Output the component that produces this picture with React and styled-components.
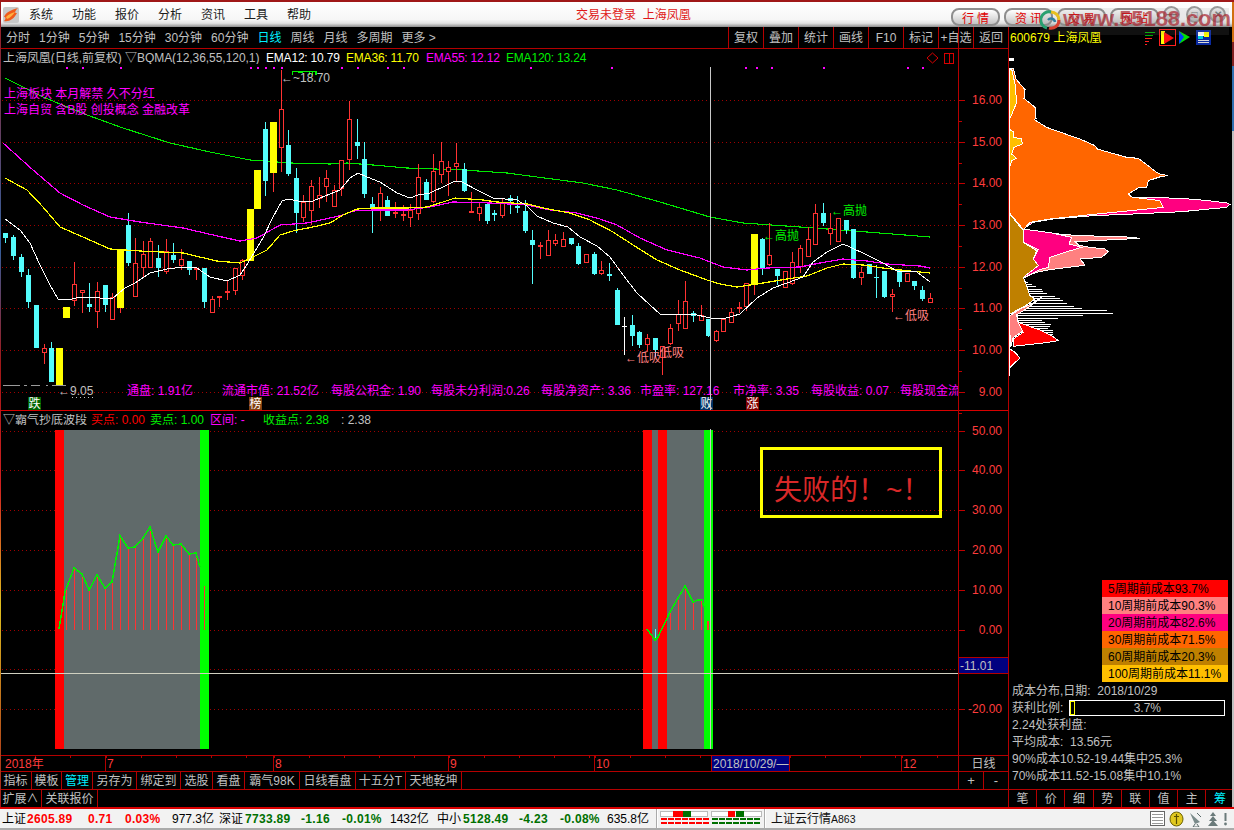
import React from 'react';
import styled, { createGlobalStyle } from 'styled-components';

const FONT = '"Liberation Sans","Noto Sans CJK SC",sans-serif';
const RED = '#b40000';
const GRAY = '#c0c0c0';

const Global = createGlobalStyle`
  html, body { margin: 0; padding: 0; background: #000; }
  body { width: 1234px; height: 830px; overflow: hidden; font-family: ${FONT}; }
`;

const Page = styled.div`
  position: relative; width: 1234px; height: 830px; display: flex; flex-direction: column;
  background: #000; color: ${GRAY}; font-size: 12px; overflow: hidden; line-height: 1;
`;
const EdgeStrip = styled.div`
  position: absolute; top: 2px; bottom: 23px; width: ${p => p.$w}px; ${p => p.$side}: 0;
  background: ${p => p.$bg};
`;

/* ---------- title bar ---------- */
const TitleBar = styled.header`
  height: 25px; flex: none; border-top: 2px solid #a01818; display: flex; align-items: center; position: relative;
  background: linear-gradient(#ffffff 0, #f6f6f6 70%, #e2e2e2 85%, #8c8c8c 100%);
  color: #222;
`;
const Logo = styled.svg` width: 16px; height: 16px; margin: 0 0 0 3px; flex: none; `;
const Menu = styled.nav` display: flex; margin-left: 10px; `;
const MenuItem = styled.span` width: 43px; font-size: 12px; color: #1c1c1c; `;
const LoginTitle = styled.span` margin-left: 246px; color: #e01818; font-size: 12px; white-space: pre; `;
const PillGroup = styled.div` position: absolute; left: 951px; top: 6px; display: flex; gap: 4px; `;
const Pill = styled.button`
  width: ${p => p.$w}px; height: 18px; padding: 0 9px; display: flex; justify-content: space-between; align-items: center;
  border: 2px solid #8e8e8e; border-radius: 8px; color: #e00000; font: 12px ${FONT};
  background: linear-gradient(#ffffff, #dddddd 60%, #c4c4c4);
`;
const WindowButtons = styled.div` position: absolute; left: 1163px; top: 4px; display: flex; gap: 6px; `;
const WindowButton = styled.span`
  width: 17px; height: 17px; border-radius: 50%; border: 2px solid #9a9a9a; box-sizing: border-box;
  display: flex; align-items: center; justify-content: center; color: #777; font-size: 10px; font-weight: bold;
  background: linear-gradient(#f4f4f4, #b8b8b8);
`;
const Watermark = styled.div`
  position: absolute; left: 1040px; top: 8px; width: 189px; height: 27px; display: flex; align-items: flex-start;
  background: rgba(128,128,128,.13); pointer-events: none;
`;
const WatermarkText = styled.span`
  font: bold 22px/22px ${FONT}; color: rgba(170,40,50,.72); margin-left: 1px; letter-spacing: -.1px; white-space: nowrap;
`;

/* ---------- workspace ---------- */
const Workspace = styled.div` flex: 1; display: flex; min-height: 0; `;
const LeftCol = styled.section` width: 1008px; flex: none; display: flex; flex-direction: column; `;
const RightCol = styled.aside` width: 225px; flex: none; border-left: 1px solid ${RED}; display: flex; flex-direction: column; `;

const Toolbar = styled.div`
  height: 21px; flex: none; display: flex; align-items: center; border-bottom: 1px solid ${RED}; padding-left: 6px; gap: 9px;
`;
const ToolItem = styled.span` color: ${p => (p.$active ? '#00f0ff' : GRAY)}; white-space: nowrap; `;
const ToolCells = styled.div` margin-left: auto; display: flex; align-self: stretch; `;
const ToolCell = styled.span`
  width: 35px; box-sizing: border-box; border-left: 1px solid ${RED}; display: flex; align-items: center; justify-content: center; white-space: nowrap;
`;

const PanelHeader = styled.div`
  height: 18px; flex: none; display: flex; align-items: center; padding-left: 3px; white-space: pre; overflow: hidden;
`;
const Caption = styled.span`
  color: ${p => p.$c || GRAY}; flex: none; width: ${p => (p.$w ? `${p.$w}px` : 'auto')};
  letter-spacing: ${p => p.$ls || 0}px; overflow: hidden;
`;
const HeaderMarks = styled.svg` width: 31px; height: 18px; margin-left: auto; flex: none; `;
const AxisStub = styled.span` width: 50px; box-sizing: border-box; border-left: 1px solid ${RED}; align-self: stretch; flex: none; margin-left: ${p => (p.$auto ? 'auto' : 0)}; `;

const PlotRow = styled.div` height: ${p => p.$h}px; flex: none; display: flex; border-bottom: ${p => (p.$line ? '1px solid #d80000' : 'none')}; `;
const PlotSvg = styled.svg` width: 958px; height: 100%; display: block; flex: none; font-family: ${FONT}; `;
const AxisSvg = styled.svg` width: 50px; height: 100%; display: block; flex: none; font-family: ${FONT}; overflow: visible; `;
const Label = styled.text` font-size: ${p => p.$s || 12}px; fill: ${p => p.$c || GRAY}; `;

const DateRow = styled.div` height: 15px; flex: none; border-top: 1px solid ${RED}; display: flex; `;
const DateCell = styled.span`
  width: ${p => p.$w}px; box-sizing: border-box; display: flex; align-items: center; padding-left: ${p => (p.$first ? 5 : 1)}px;
  color: #ff3c3c; border-left: ${p => (p.$first ? 'none' : `1px solid ${RED}`)};
  background: repeating-linear-gradient(90deg, ${RED} 0 1px, transparent 1px 35px) 0 0 / 100% 2px no-repeat;
`;
const CursorDate = styled.span`
  width: 79px; box-sizing: border-box; background: #000080; color: ${GRAY}; display: flex; align-items: center;
  border-left: 1px solid ${RED}; border-right: 1px solid ${RED}; padding-left: 1px; white-space: nowrap;
`;
const DateGap = styled.span` flex: 1; background: repeating-linear-gradient(90deg, ${RED} 0 1px, transparent 1px 35px) 0 0 / 100% 2px no-repeat; `;
const PeriodCell = styled.span`
  width: 50px; box-sizing: border-box; border-left: 1px solid ${RED}; display: flex; align-items: center; justify-content: center; flex: none;
`;
const TabRow = styled.div` height: 17px; flex: none; border-top: 1px solid ${RED}; display: flex; `;
const Tab = styled.span`
  width: ${p => p.$w}px; box-sizing: border-box; border-right: 1px solid ${RED}; display: flex; align-items: center; justify-content: center;
  color: ${p => (p.$active ? '#00f0ff' : GRAY)}; white-space: nowrap; flex: none;
`;
const ZoomCell = styled.span`
  width: 25px; box-sizing: border-box; flex: none; border-left: 1px solid ${RED}; display: flex; align-items: center; justify-content: center; font-size: 13px;
`;
const RowSpacer = styled.span` flex: 1; `;

/* ---------- right column ---------- */
const StockHead = styled.div` height: 21px; flex: none; display: flex; align-items: center; padding-left: 1px; color: #ffff00; `;
const HeadIcon = styled.svg` flex: none; position: relative; `;
const DistSvg = styled.svg` width: 224px; height: 532px; flex: none; display: block; `;
const Legend = styled.ul` list-style: none; margin: 0 0 0 93px; padding: 0; width: 126px; flex: none; `;
const LegendRow = styled.li`
  height: 17px; background: ${p => p.$c}; color: #000; display: flex; align-items: center; padding-left: 6px; white-space: nowrap;
`;
const InfoRow = styled.div` height: 17px; flex: none; padding-left: 3px; display: flex; align-items: center; white-space: pre; `;
const RatioBar = styled.div`
  position: relative; margin-left: 6px; width: 156px; height: 16px; box-sizing: border-box; border: 1px solid #fff;
  display: flex; align-items: center; justify-content: center;
`;
const RatioFill = styled.span`
  position: absolute; left: 0; top: 0; bottom: 0; width: 3px; border: 1px solid #ffff00; box-sizing: content-box; height: 12px;
`;
const BottomTabs = styled.div` height: 17px; flex: none; margin-top: auto; border-top: 1px solid ${RED}; display: flex; `;
const BottomTab = styled.span`
  width: 28.2px; box-sizing: border-box; border-right: 1px solid ${RED}; display: flex; align-items: center; justify-content: center;
  color: ${p => (p.$active ? '#00f0ff' : GRAY)}; flex: none;
`;

/* ---------- status bar ---------- */
const StatusBar = styled.footer`
  height: 23px; flex: none; box-sizing: border-box; border-top: 2px solid #d80000; border-bottom: 2px solid #aaa; background: #f2f2f2;
  display: flex; align-items: center; padding-left: 2px; color: #000; white-space: nowrap;
`;
const StatusItem = styled.span`
  width: ${p => p.$w}px; flex: none; color: ${p => p.$c || '#000'}; font-weight: ${p => (p.$b ? 'bold' : 'normal')}; font-size: 12px;
  letter-spacing: ${p => (p.$b ? 0.3 : 0)}px;
`;
const StatusSep = styled.span` width: 0; align-self: stretch; border-left: 1px solid #aaa; border-right: 1px solid #fff; margin: 0 ${p => p.$m || 4}px; `;
const Ticker = styled.span` margin-left: 3px; color: #111; `;
const TickerCode = styled.span` font-size: 10.5px; `;
const StatusIcons = styled.div` margin-left: auto; display: flex; align-items: center; gap: 4px; padding-right: 6px; `;

/* ---------- data ---------- */
const candles = [
  [5,233,233,238,243,'c'],[13,235,237,256,260,'c'],[21,254,257,272,277,'c'],[28,269,275,302,308,'c'],[36,305,305,348,348,'c'],
  [44,344,348,353,364,'r'],[51,342,348,382,382,'c'],[59,348,348,385,385,'y'],[66,307,307,318,318,'y'],[74,262,284,301,306,'r'],
  [82,290,290,293,313,'r'],[89,283,304,307,312,'c'],[97,282,291,312,328,'r'],[105,285,285,305,312,'c'],[112,293,297,320,320,'r'],
  [120,249,249,308,313,'y'],[128,213,225,263,266,'c'],[135,238,263,297,297,'r'],[143,241,254,268,278,'r'],[150,238,241,268,268,'r'],
  [158,245,258,268,277,'c'],[166,239,251,272,274,'r'],[173,243,255,260,263,'c'],[181,249,259,266,270,'r'],[189,261,261,270,275,'c'],
  [196,268,268,270,280,'r'],[204,268,268,302,308,'c'],[212,296,299,313,313,'r'],[219,296,296,297,307,'r'],[227,281,291,293,300,'r'],
  [235,268,268,291,295,'r'],[242,259,260,276,280,'r'],[250,209,209,261,261,'y'],[257,170,170,209,209,'y'],[265,122,129,181,196,'c'],
  [273,122,122,173,192,'y'],[281,70,109,148,172,'r'],[288,130,145,174,176,'c'],[296,168,178,213,233,'c'],[303,195,202,218,222,'r'],
  [311,180,186,211,225,'r'],[319,177,195,199,208,'r'],[326,170,178,187,202,'r'],[334,185,190,207,207,'r'],[341,160,160,189,196,'r'],
  [349,101,119,160,170,'r'],[357,119,142,146,159,'c'],[364,142,159,194,198,'c'],[372,197,204,208,233,'c'],[380,187,193,209,221,'r'],
  [387,196,200,216,216,'c'],[395,202,212,214,218,'r'],[403,205,214,215,221,'r'],[410,204,210,218,227,'r'],[418,164,177,214,220,'r'],
  [426,179,182,200,200,'c'],[433,154,171,202,203,'r'],[441,142,161,175,183,'r'],[448,161,167,172,196,'r'],[456,143,163,167,181,'r'],
  [464,163,169,191,192,'c'],[471,192,211,213,213,'r'],[479,202,207,214,221,'r'],[487,204,204,221,224,'c'],[494,210,213,215,221,'c'],
  [502,199,203,216,218,'r'],[510,195,198,201,214,'c'],[517,196,206,208,213,'c'],[525,200,211,231,233,'c'],[532,230,240,245,284,'c'],
  [540,242,245,246,259,'r'],[548,230,240,256,256,'r'],[555,234,240,244,246,'r'],[563,232,239,247,247,'r'],[571,238,238,244,245,'c'],
  [578,243,246,264,265,'c'],[586,254,254,263,263,'r'],[594,252,254,274,275,'c'],[601,261,270,274,275,'r'],[609,263,274,276,281,'c'],
  [617,288,290,325,325,'c'],[624,317,326,327,355,'w'],[632,315,325,336,346,'c'],[639,331,332,345,348,'c'],[647,334,338,345,351,'r'],
  [655,338,338,350,357,'c'],[662,346,346,358,375,'r'],[670,324,328,344,345,'r'],[678,300,314,324,331,'r'],[685,281,301,329,329,'r'],
  [693,311,313,316,322,'c'],[701,305,315,321,321,'r'],[708,319,319,336,337,'c'],[716,330,331,341,342,'r'],[723,319,319,332,332,'r'],
  [731,308,312,323,323,'r'],[739,302,307,308,313,'r'],[746,283,283,307,311,'r'],[754,234,234,285,295,'y'],[762,238,239,268,275,'c'],
  [769,223,255,265,266,'r'],[777,269,269,276,285,'c'],[785,271,271,288,288,'r'],[792,252,262,284,285,'r'],[800,245,248,267,273,'r'],
  [808,227,239,257,257,'r'],[815,204,213,245,245,'r'],[823,203,213,223,226,'c'],[830,213,228,234,245,'r'],[838,218,218,242,242,'r'],
  [846,220,220,230,234,'c'],[853,229,229,278,279,'c'],[861,267,272,278,285,'r'],[869,264,264,274,274,'c'],[876,265,277,278,298,'c'],
  [884,271,271,297,298,'c'],[892,289,294,297,312,'r'],[899,269,269,282,287,'c'],[907,273,273,282,282,'r'],[914,281,281,286,290,'c'],
  [922,286,290,299,301,'c'],[930,293,298,303,303,'r'],
];

const white = '5,219 20,230 30,243 40,265 50,285 58,299 68,300 80,297 100,298 113,298 125,288 135,283 150,273 167,269 183,267 197,268 210,277 227,281 240,275 248,263 263,238 273,217 282,201 288,199 303,202 313,201 325,196 340,190 350,178 358,173 367,177 380,182 397,193 410,198 418,195 430,193 447,185 455,181 462,182 477,190 493,198 517,200 527,206 537,216 553,223 568,227 580,237 597,246 610,257 623,275 637,293 650,305 660,314 670,315 693,314 710,318 723,319 740,314 757,298 773,288 787,283 803,277 813,262 827,252 843,244 850,247 867,255 883,263 897,271 917,272 930,282';
const yellow = '5,178 27,190 43,207 60,227 83,237 110,249 140,251 183,253 217,261 240,263 253,257 267,250 280,235 293,231 313,227 330,223 343,215 357,209 373,208 407,208 427,207 443,202 455,198 483,200 497,202 527,204 543,208 570,213 590,220 613,232 633,245 657,260 680,270 707,280 720,284 737,287 763,283 787,279 807,276 827,268 843,264 863,265 883,268 910,271 930,273';
const magenta = '3,143 33,170 60,193 83,205 110,217 140,222 183,228 213,235 240,241 257,238 280,225 307,223 330,218 343,215 353,211 373,210 407,210 430,207 453,202 490,203 527,205 550,210 577,213 600,219 617,225 640,238 667,250 700,258 723,267 747,270 767,268 800,267 820,263 843,259 867,261 887,264 920,266 930,268';
const green = '5,78 43,97 87,115 123,128 170,143 210,152 250,160 290,163 330,164 347,163 373,165 407,168 463,170 507,173 537,177 583,183 617,190 660,202 710,217 743,223 800,227 867,232 930,237';

const priceTicks = [100,142,183,225,267,308,350,392];
const priceLabels = ['16.00','15.00','14.00','13.00','12.00','11.00','10.00','9.00'];
const lowerTicks = [431,470,510,550,590,630,669,709];
const lowerLabels = ['50.00','40.00','30.00','20.00','10.00','0.00','','-20.00'];

const magentaDots = [66,82,120,250,257,265,273,281,341,357,387,403,530,611,745,756,771,823,907,922];
const stats = [
  [127,'通盘: 1.91亿'],[222,'流通市值: 21.52亿'],[331,'每股公积金: 1.90'],[431,'每股未分利润:0.26'],[541,'每股净资产: 3.36'],
  [640,'市盈率: 127.16'],[733,'市净率: 3.35'],[811,'每股收益: 0.07'],[900,'每股现金流'],
];
const tags = [[28,'跌','#006400'],[249,'榜','#804010'],[700,'败','#003366'],[746,'涨','#800000']];

const line1 = '59,629 65,592 74,568 82,574 89,590 97,575 105,588 112,582 120,536 128,548 135,547 143,538 150,527 158,552 166,536 173,545 181,544 189,554 196,553 200,567';
const red1 = [[66,590],[74,568],[82,574],[89,590],[97,575],[105,588],[112,582],[120,538],[128,548],[135,547],[143,538],[150,527],[158,552],[166,536],[173,545],[181,544],[189,554],[196,553],[204,586]];
const line2 = '647,629 655,640 658,637 670,612 685,586 693,602 698,600 702,600 704,607';
const red2 = [[670,612],[678,600],[685,586],[693,602],[701,600]];

const distWhite = [[668,85],[675,95],[682,108],[690,125],[696,130],[703,140],[710,165],[717,180],[724,188],[732,200],[740,222],[747,245],[754,322],[762,340],[769,250],[776,175],[783,125],[789,135],[795,152],[801,150],[807,145],[813,158],[819,160],[825,160],[831,158],[840,170]];
const P = {
  orange: '27,28 40,28 48,60 75,92 72,118 105,145 108,178 103,182 140,205 205,228 240,240 285,260 292,270 380,295 415,298 470,340 480,345 505,350 485,352 445,365 440,385 418,385 385,405 395,414 480,425 490,445 470,447 300,464 150,480 90,490 70,512 27,460',
  gold1: '27,30 35,30 45,75 50,130 42,150 27,185',
  gold2: '27,210 40,218 42,235 65,240 67,255 42,265 35,285 50,298 35,305 27,330',
  deep: '385,405 395,414 545,418 625,425 680,432 690,436 680,445 545,458 400,465 280,470 160,480 100,490 70,510 155,522 215,535 207,555 245,565 195,580 150,595 145,625 118,632 75,655 70,650 115,620 100,600 115,572 70,550 50,500 300,440',
  lightA: '70,655 110,640 150,632 245,620 255,618 240,600 305,595 325,578 315,570 270,565 235,558 225,548 420,538 370,533 235,530 155,523 70,515',
  brown: '27,462 70,515 70,550 110,575 100,600 115,620 70,655 80,680 90,710 105,720 85,735 30,765 27,770',
  lightB: '125,715 95,735 60,750 30,770 27,772 32,865 40,835 70,815 55,790 50,768 100,735',
  redA: '55,790 125,815 155,830 175,845 130,852 40,862 40,840 70,820',
  redB: '27,925 30,870 45,880 60,897 30,925 27,942',
};
const legend = [
  ['#ff0000','5周期前成本93.7%'],['#ff8080','10周期前成本90.3%'],['#ff0080','20周期前成本82.6%'],
  ['#ff6600','30周期前成本71.5%'],['#bf8000','60周期前成本20.3%'],['#ffbf00','100周期前成本11.1%'],
];
const statusItems = [
  ['上证',25],['2605.89',61,'#ff0000',1],['0.71',37,'#ff0000',1],['0.03%',47,'#ff0000',1],['977.3亿',47],
  ['深证',26],['7733.89',56,'#007000',1],['-1.16',41,'#007000',1],['-0.01%',48,'#007000',1],['1432亿',47],
  ['中小',26],['5128.49',56,'#007000',1],['-4.23',41,'#007000',1],['-0.08%',47,'#007000',1],['635.8亿',47],
];

/* ---------- drawings ---------- */
function Candle({ d }) {
  const [cx, hi, top, bot, lo, t] = d;
  const px = Math.round(cx);
  const col = { c: '#54fcfc', r: '#ff3232', y: '#ffff00', w: '#ffffff' }[t];
  const wick = t === 'y' ? '#ff3232' : col;
  if (t === 'y') return (
    <g>
      <line x1={px + .5} x2={px + .5} y1={hi} y2={lo} stroke={wick} />
      <rect x={px - 3} y={top} width={7} height={bot - top} fill={col} />
    </g>
  );
  return (
    <g>
      <line x1={px + .5} x2={px + .5} y1={hi} y2={lo} stroke={wick} />
      {t === 'r'
        ? <rect x={px - 1.5} y={top + .5} width={4} height={Math.max(bot - top - 1, 1)} fill="#000" stroke={col} />
        : <rect x={px - 2} y={top} width={5} height={Math.max(bot - top, 1)} fill={col} />}
    </g>
  );
}

function UpperPlot() {
  return (
    <PlotSvg viewBox="0 67 958 343" shapeRendering="crispEdges">
      {priceTicks.map(y => <line key={y} x1={2} x2={958} y1={y + .5} y2={y + .5} stroke="#a00000" strokeDasharray="1 3" />)}
      {magentaDots.map(x => <rect key={x} x={x} y={67} width={2} height={2} fill="#ff00ff" />)}
      <polyline points={green} fill="none" stroke="#00e800" strokeWidth="1.1" />
      {candles.map(d => <Candle key={d[0]} d={d} />)}
      <polyline points={magenta} fill="none" stroke="#ff00ff" strokeWidth="1.2" />
      <polyline points={yellow} fill="none" stroke="#ffff00" strokeWidth="1.2" />
      <polyline points={white} fill="none" stroke="#ffffff" strokeWidth="1" />
      <path d="M292 75V71H316V75M298 72H303M309 72V75M312 72V75M315 72V75" fill="none" stroke="#00f000" />
      <Label x={281} y={82} $s={12}>←~18.70</Label>
      <Label x={4} y={98} $c="#ff00ff">上海板块 本月解禁 久不分红</Label>
      <Label x={4} y={114} $c="#ff00ff">上海自贸 含B股 创投概念 金融改革</Label>
      <Label x={763} y={240} $c="#00f000">←高抛</Label>
      <Label x={831} y={215} $c="#00f000">←高抛</Label>
      <Label x={625} y={362} $c="#ff8080">←低吸</Label>
      <Label x={660} y={357} $c="#ff8080">低吸</Label>
      <Label x={893} y={320} $c="#ff8080">←低吸</Label>
      <Label x={58} y={395}>←9.05</Label>
      <path d="M3 385.5H20M24 385.5H27M31 385.5H40M46 385.5H48M52 385.5H66" stroke="#9a9a9a" fill="none" />
      <line x1={72} x2={96} y1={397.5} y2={397.5} stroke="#c0c0c0" strokeDasharray="1 3" />
      {stats.map(([x, t]) => <Label key={x} x={x} y={395} $c="#ff00ff">{t}</Label>)}
      {tags.map(([x, t, c]) => (
        <g key={x}>
          <rect x={x} y={396.5} width={13} height={13} fill={c} />
          <Label x={x + .5} y={407.5} $c="#fff">{t}</Label>
        </g>
      ))}
      <line x1={710.5} x2={710.5} y1={67} y2={410} stroke="#c8c8c8" />
    </PlotSvg>
  );
}

function PriceAxis({ vb, ticks, labels, minor, children }) {
  return (
    <AxisSvg viewBox={vb}>
      <line x1={958.5} x2={958.5} y1={0} y2={755} stroke={RED} />
      {ticks.map((y, i) => (
        <g key={y}>
          <line x1={959} x2={965} y1={y + .5} y2={y + .5} stroke="#c00000" />
          {minor && <line x1={959} x2={962} y1={y + 21.5} y2={y + 21.5} stroke="#c00000" />}
          <Label x={1002} y={y + 4} textAnchor="end" $c="#ff3c3c">{labels[i]}</Label>
        </g>
      ))}
      {children}
    </AxisSvg>
  );
}

function LowerPlot() {
  return (
    <PlotSvg viewBox="0 429 958 326" shapeRendering="crispEdges">
      {lowerTicks.map(y => <line key={y} x1={2} x2={958} y1={y + .5} y2={y + .5} stroke="#a00000" strokeDasharray="1 3" />)}
      <rect x={55} y={430} width={9} height={319} fill="#ff0000" />
      <rect x={64} y={430} width={136} height={319} fill="#606a6a" />
      <rect x={200} y={430} width={9} height={319} fill="#00ff00" />
      <rect x={643} y={430} width={9} height={319} fill="#ff0000" />
      <rect x={652} y={430} width={6} height={319} fill="#606a6a" />
      <rect x={658} y={430} width={9} height={319} fill="#ff0000" />
      <rect x={667} y={430} width={37} height={319} fill="#606a6a" />
      <rect x={704} y={430} width={9} height={319} fill="#00ff00" />
      {red1.map(([x, y]) => <line key={x} x1={x + .5} x2={x + .5} y1={y} y2={630} stroke="#ff3232" />)}
      {red2.map(([x, y]) => <line key={x} x1={x + .5} x2={x + .5} y1={y} y2={630} stroke="#ff3232" />)}
      <rect x={707} y={621} width={2} height={9} fill="#ff3232" />
      <line x1={655.5} x2={655.5} y1={629} y2={641} stroke="#54fcfc" />
      <polyline points={line1} fill="none" stroke="#00f000" strokeWidth="1.5" />
      <polyline points={line2} fill="none" stroke="#00f000" strokeWidth="1.5" />
      <line x1={710.5} x2={710.5} y1={428} y2={749} stroke="#c8c8c8" />
      <line x1={0} x2={958} y1={673.5} y2={673.5} stroke="#d0d0c0" />
      <rect x={761.5} y={448.5} width={179} height={68} fill="none" stroke="#ffff00" strokeWidth="3" />
      <Label x={774} y={500} $s={28} $c="#d82828">失败的！~！</Label>
    </PlotSvg>
  );
}

const Swirl = () => (
  <svg width="22" height="24" viewBox="0 0 22 24" style={{ flex: 'none' }}>
    <path d="M11 4a8 8 0 0 1 8 8" fill="none" stroke="#e8c020" strokeWidth="3" />
    <path d="M19 12a8 8 0 0 1-10 8" fill="none" stroke="#d84030" strokeWidth="3" />
    <path d="M7 20a8 8 0 0 1 4-16" fill="none" stroke="#28a070" strokeWidth="3" />
    <path d="M8 12a4 4 0 0 1 7 2" fill="none" stroke="#3080a0" strokeWidth="2.5" />
  </svg>
);

function IndicatorBoxes() {
  const dash = (x0, col, n = 7) => Array.from({ length: n }).flatMap((_, i) => [
    <rect key={`a${x0}${i}`} x={x0 + i * 7} y={7} width={6} height={2} fill={col} />,
    <rect key={`b${x0}${i}`} x={x0 + i * 7} y={11} width={6} height={2} fill={col} />,
  ]);
  return (
    <svg width="102" height="16" viewBox="0 0 102 16" style={{ flex: 'none' }}>
      <rect x=".5" y=".5" width="47" height="5" fill="#fff" stroke="#bbb" />
      <rect x="51.5" y=".5" width="50" height="5" fill="#fff" stroke="#bbb" />
      <rect x="13" y="0" width="10" height="6" fill="#ff0000" />
      <rect x="23" y="0" width="8" height="6" fill="#007000" />
      <rect x="68" y="0" width="7" height="6" fill="#ff0000" />
      <rect x="76" y="0" width="8" height="6" fill="#007000" />
      {dash(1, '#ff0000')}
      {dash(52, '#007000')}
    </svg>
  );
}

const tabs = [['指标',32],['模板',30],['管理',31,1],['另存为',44],['绑定到',44],['选股',32],['看盘',32],['霸气98K',55],['日线看盘',56],['十五分T',50],['天地乾坤',56]];

export default function App() {
  return (
    <>
      <Global />
      <Page>
        <TitleBar>
          <Logo viewBox="0 0 16 16">
            <rect width="16" height="16" fill="#c8c8c8" rx="2" />
            <path d="M1 10C3 5 8 3 15 1 12 4 11 6 14 6 11 12 6 15 1 14 3 12 3 10 1 10z" fill="#f05a1a" />
            <path d="M3 10c3-3 6-4 9-5-2 3-5 6-8 7z" fill="#ffb040" />
          </Logo>
          <Menu>{['系统','功能','报价','分析','资讯','工具','帮助'].map(m => <MenuItem key={m}>{m}</MenuItem>)}</Menu>
          <LoginTitle>交易未登录  上海凤凰</LoginTitle>
          <PillGroup>
            <Pill $w={49}><span>行</span><span>情</span></Pill>
            <Pill $w={49}><span>资</span><span>讯</span></Pill>
            <Pill $w={49}><span>交</span><span>易</span></Pill>
            <Pill $w={49}><span>网</span><span>站</span></Pill>
          </PillGroup>
          <WindowButtons>
            <WindowButton>—</WindowButton>
            <WindowButton>□</WindowButton>
            <WindowButton>✕</WindowButton>
          </WindowButtons>
        </TitleBar>

        <Workspace>
          <LeftCol>
            <Toolbar>
              {['分时','1分钟','5分钟','15分钟','30分钟','60分钟'].map(t => <ToolItem key={t}>{t}</ToolItem>)}
              <ToolItem $active>日线</ToolItem>
              {['周线','月线','多周期','更多 >'].map(t => <ToolItem key={t}>{t}</ToolItem>)}
              <ToolCells>
                {['复权','叠加','统计','画线','F10','标记','+自选','返回'].map(t => <ToolCell key={t}>{t}</ToolCell>)}
              </ToolCells>
            </Toolbar>
            <PanelHeader>
              <Caption $w={263} $ls={-0.05}>上海凤凰(日线,前复权) ▽BQMA(12,36,55,120,1)</Caption>
              <Caption $w={80} $ls={-0.2} $c="#fff">EMA12: 10.79</Caption>
              <Caption $w={80} $ls={-0.2} $c="#ffff00">EMA36: 11.70</Caption>
              <Caption $w={80} $ls={-0.2} $c="#ff00ff">EMA55: 12.12</Caption>
              <Caption $w={90} $ls={-0.2} $c="#00f000">EMA120: 13.24</Caption>
              <HeaderMarks viewBox="0 0 31 18">
                <path d="M5.5 4l5.5 5-5.5 5L0 9z" fill="none" stroke="#d80000" />
                <rect x="17.5" y="4.5" width="9" height="10" fill="none" stroke="#d80000" />
                <line x1="22.5" x2="22.5" y1="5" y2="14" stroke="#d80000" />
              </HeaderMarks>
              <AxisStub />
            </PanelHeader>
            <PlotRow $h={343} $line>
              <UpperPlot />
              <PriceAxis vb="958 67 50 343" ticks={priceTicks} labels={priceLabels} minor />
            </PlotRow>
            <PanelHeader>
              <Caption $w={88}>▽霸气抄底波段</Caption>
              <Caption $w={59} $c="#ff0000">买点: 0.00</Caption>
              <Caption $w={60} $c="#00f000">卖点: 1.00</Caption>
              <Caption $w={53} $c="#ff00ff">区间: -</Caption>
              <Caption $w={78} $c="#00f000">收益点: 2.38</Caption>
              <Caption>: 2.38</Caption>
              <AxisStub $auto />
            </PanelHeader>
            <PlotRow $h={326}>
              <LowerPlot />
              <PriceAxis vb="958 429 50 326" ticks={lowerTicks} labels={lowerLabels}>
                <rect x={959} y={658} width={49} height={15} fill="#000080" />
                <line x1={958} x2={1008} y1={657.5} y2={657.5} stroke={RED} />
                <line x1={958} x2={1008} y1={673.5} y2={673.5} stroke={RED} />
                <Label x={960} y={670} $c={GRAY}>-11.01</Label>
              </PriceAxis>
            </PlotRow>
            <DateRow>
              <DateCell $w={105} $first>2018年</DateCell>
              <DateCell $w={168}>7</DateCell>
              <DateCell $w={175}>8</DateCell>
              <DateCell $w={146}>9</DateCell>
              <DateCell $w={117}>10</DateCell>
              <CursorDate>2018/10/29/—</CursorDate>
              <DateGap />
              <DateCell $w={57}>12</DateCell>
              <PeriodCell>日线</PeriodCell>
            </DateRow>
            <TabRow>
              {tabs.map(([t, w, a]) => <Tab key={t} $w={w} $active={a}>{t}</Tab>)}
              <RowSpacer />
              <ZoomCell>+</ZoomCell>
              <ZoomCell>-</ZoomCell>
            </TabRow>
            <TabRow>
              <Tab $w={42}>扩展∧</Tab>
              <Tab $w={56}>关联报价</Tab>
            </TabRow>
          </LeftCol>

          <RightCol>
            <StockHead>
              <span>600679 上海凤凰</span>
              <HeadIcon width="68" height="18" viewBox="0 0 68 18" style={{ marginLeft: 43 }}>
                <path d="M1 3.5H11M1 6.5H9" stroke="#00b000" fill="none" />
                <path d="M1 9.5H8M1 12.5H5M1 15.5H3" stroke="#ff2020" fill="none" />
                <rect x="15.5" y=".5" width="16" height="16" fill="#000" stroke="#ff2020" />
                <path d="M17 2h4v13h-4z" fill="#ffff00" />
                <path d="M20 3l10 6-10 6z" fill="#ff1010" />
                <path d="M35 2l11 6-11 7 3-7z" fill="#00e000" />
                <path d="M35 2l5 6-5 7z" fill="#0040ff" />
                <rect x="52" y="1" width="15" height="15" fill="#0a2aa0" />
                <rect x="54" y="3" width="11" height="4" fill="#fff" />
                <rect x="60" y="3" width="5" height="5" fill="#ffff00" />
                <rect x="54" y="7" width="5" height="3" fill="#00d0e0" />
                <path d="M54 11.5H65M54 13.5H65" stroke="#d8d8d8" />
              </HeadIcon>
            </StockHead>
            <DistSvg viewBox="27 -33 672 1596" shapeRendering="crispEdges" preserveAspectRatio="none">
              {distWhite.map(([y, x]) => <rect key={y} x={27} y={y} width={x - 27} height={3} fill="#fff" />)}
              <rect x={27} y={-3} width={15} height={8} fill="#fff" />
              {[['lightA','#ff8080'],['deep','#ff0080'],['orange','#ff6600'],['gold1','#ffbf00'],['gold2','#ffbf00'],['brown','#bf8000'],['lightB','#ff8080'],['redA','#ff0000'],['redB','#ff0000']].map(([k, c]) => (
                <polygon key={k} points={P[k]} fill={c} stroke="#fff" strokeWidth="3" />
              ))}
              <rect x={27} y={26} width={3} height={925} fill="#fff" />
            </DistSvg>
            <Legend>{legend.map(([c, t]) => <LegendRow key={t} $c={c}>{t}</LegendRow>)}</Legend>
            <InfoRow>成本分布,日期:  2018/10/29</InfoRow>
            <InfoRow>获利比例:<RatioBar><RatioFill />3.7%</RatioBar></InfoRow>
            <InfoRow>2.24处获利盘:</InfoRow>
            <InfoRow>平均成本:  13.56元</InfoRow>
            <InfoRow>90%成本10.52-19.44集中25.3%</InfoRow>
            <InfoRow>70%成本11.52-15.08集中10.1%</InfoRow>
            <BottomTabs>
              {['笔','价','细','势','联','值','主'].map(t => <BottomTab key={t}>{t}</BottomTab>)}
              <BottomTab $active>筹</BottomTab>
            </BottomTabs>
          </RightCol>
        </Workspace>

        <StatusBar>
          {statusItems.map(([t, w, c, b], i) => <StatusItem key={i} $w={w} $c={c} $b={b}>{t}</StatusItem>)}
          <StatusSep $m={2} />
          <IndicatorBoxes />
          <StatusSep $m={2} />
          <Ticker>上证云行情<TickerCode>A863</TickerCode></Ticker>
          <StatusIcons>
            <svg width="15" height="15" viewBox="0 0 15 15">
              <rect x=".5" y=".5" width="14" height="14" fill="#fff" stroke="#666" />
              <path d="M2 3.5H13M2 6.5H13M2 9.5H13M2 12.5H13" stroke="#999" />
            </svg>
            <svg width="15" height="16" viewBox="0 0 15 16">
              <ellipse cx="7.5" cy="8" rx="6.5" ry="7" fill="#e0c820" stroke="#6a6000" />
              <path d="M7.5 3v10M5 5.5h5" stroke="#5a5000" strokeWidth="1.2" />
            </svg>
            <svg width="15" height="16" viewBox="0 0 15 16">
              <path d="M2 2l10 9-5 2z" fill="#7a8a8a" />
              <path d="M9 2l4 4M7 13l-2 3h6l-2-3" stroke="#5a6a6a" fill="none" />
            </svg>
            <svg width="12" height="16" viewBox="0 0 12 16">
              <path d="M6 1l3 4H3zM6 5l4 5H2zM6 9l5 6H1z" fill="#6a7a7a" />
            </svg>
            <svg width="5" height="16" viewBox="0 0 5 16">
              <path d="M2.5 2v8" stroke="#6a7a7a" strokeWidth="2" />
              <circle cx="2.5" cy="13" r="1.4" fill="#6a7a7a" />
            </svg>
          </StatusIcons>
        </StatusBar>

        <Watermark>
          <Swirl />
          <WatermarkText>www.55188.com</WatermarkText>
        </Watermark>
        <EdgeStrip $side="left" $w={1} $bg="linear-gradient(#a01818, #3060a0 30%, #a01818 45%, #d02020 60%, #e0c020 75%, #a01818)" />
        <EdgeStrip $side="right" $w={2} $bg="linear-gradient(#d07010 0 5%, #802020 5% 8%, #3070b0 8% 16%, #c0c0c0 16% 100%)" />
      </Page>
    </>
  );
}
